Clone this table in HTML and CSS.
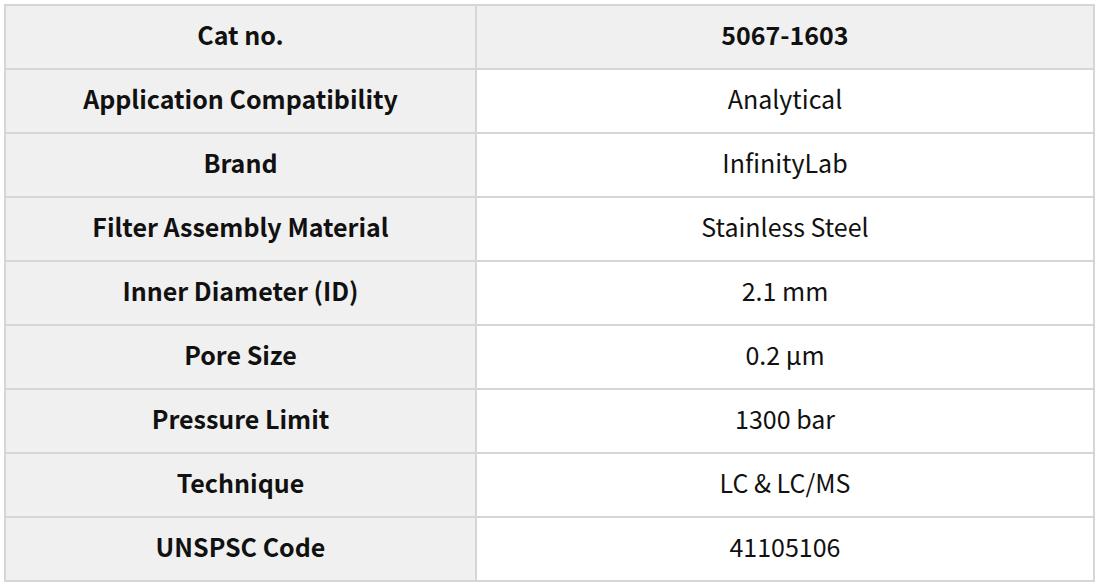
FILE: index.html
```html
<!DOCTYPE html>
<html>
<head>
<meta charset="utf-8">
<link rel="stylesheet" href="styles.css">
</head>
<body>
<table class="spec">
  <tbody>
    <tr class="head"><th>Cat no.</th><td>5067-1603</td></tr>
    <tr><th>Application Compatibility</th><td>Analytical</td></tr>
    <tr><th>Brand</th><td>InfinityLab</td></tr>
    <tr><th>Filter Assembly Material</th><td>Stainless Steel</td></tr>
    <tr><th>Inner Diameter (ID)</th><td>2.1 mm</td></tr>
    <tr><th>Pore Size</th><td>0.2 μm</td></tr>
    <tr><th>Pressure Limit</th><td>1300 bar</td></tr>
    <tr><th>Technique</th><td>LC &amp; LC/MS</td></tr>
    <tr><th>UNSPSC Code</th><td>41105106</td></tr>
  </tbody>
</table>
</body>
</html>
```
FILE: styles.css
```css
html, body {
  margin: 0;
  padding: 0;
  background: #ffffff;
}
body {
  padding: 4px;
  font-family: "Noto Sans CJK KR", "Noto Sans", sans-serif;
  color: #111111;
}
.spec {
  width: 1091px;
  border-collapse: collapse;
  table-layout: fixed;
  font-size: 25px;
  line-height: 1.2;
}
.spec th, .spec td {
  border: 2px solid #d6d6d6;
  height: 56px;
  padding: 0 10px 6px;
  text-align: center;
  vertical-align: middle;
  box-sizing: content-box;
}
.spec th {
  width: 449px;
  background: #f0f0f0;
  font-weight: 700;
}
.spec td {
  font-weight: 400;
}
.spec .head td {
  background: #f0f0f0;
  font-weight: 700;
}
```
